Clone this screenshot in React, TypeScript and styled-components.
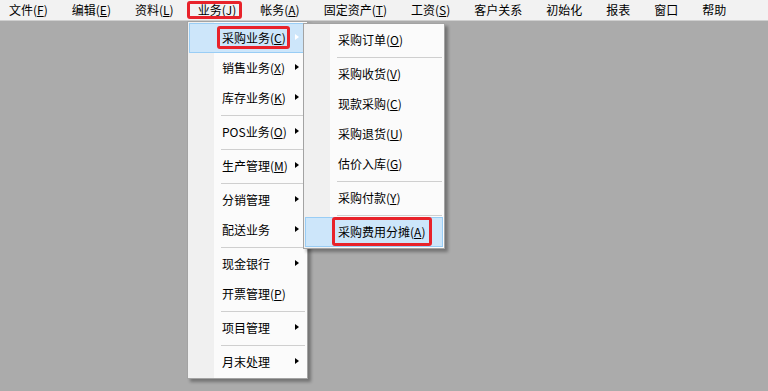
import React from 'react';
import styled, { createGlobalStyle } from 'styled-components';

const GlobalStyle = createGlobalStyle`
  html, body {
    margin: 0;
    padding: 0;
    background: #ababab;
  }
  body {
    font-family: "Noto Sans CJK SC", "Noto Sans", sans-serif;
    font-size: 12px;
    color: #000;
  }
`;

const Workspace = styled.div`
  position: relative;
  width: 768px;
  height: 391px;
  overflow: hidden;
  background: #ababab;
`;

const MenuBar = styled.div`
  display: flex;
  align-items: center;
  gap: 24px;
  height: 20px;
  padding-left: 9px;
  background: #f2f2f2;
  border-bottom: 1px solid #cfcfcf;
`;

const BarItem = styled.span`
  position: relative;
  line-height: 20px;
  white-space: nowrap;
`;

// red annotation frame drawn over the text, does not affect layout
const Marked = styled.span<{ $inset: string }>`
  position: relative;
  &::after {
    content: '';
    position: absolute;
    inset: ${p => p.$inset};
    border: 3px solid #e8222a;
    border-radius: 3px;
    pointer-events: none;
  }
`;

const Menu = styled.div<{ $left: number; $top: number; $width: number }>`
  position: absolute;
  left: ${p => p.$left}px;
  top: ${p => p.$top}px;
  width: ${p => p.$width}px;
  box-sizing: border-box;
  padding: 1px;
  border: 1px solid #a3a3a3;
  background: linear-gradient(to right, #f0f0f0 0 26px, #fbfbfb 26px);
  box-shadow: 3px 3px 3px rgba(0, 0, 0, 0.32);
  display: flex;
  flex-direction: column;
`;

const Row = styled.div<{ $active?: boolean }>`
  display: flex;
  align-items: center;
  height: 30px;
  box-sizing: border-box;
  padding: 0 6px 0 32px;
  border: 1px solid ${p => (p.$active ? '#99cdf5' : 'transparent')};
  background: ${p => (p.$active ? '#cde6fa' : 'transparent')};
  line-height: 16px;
  white-space: nowrap;
`;

const Arrow = styled.span<{ $light?: boolean }>`
  margin-left: auto;
  margin-top: -2px;
  width: 0;
  height: 0;
  border-top: 3.5px solid transparent;
  border-bottom: 3.5px solid transparent;
  border-left: 4px solid ${p => (p.$light ? '#ffffff' : '#000000')};
`;

const Separator = styled.div`
  height: 4px;
  margin: 0 1px 0 32px;
  display: flex;
  align-items: center;
  &::before {
    content: '';
    flex: 1;
    height: 1px;
    background: #cfcfcf;
  }
`;

type Entry =
  | { sep: true }
  | { label: string; key?: string; sub?: boolean; active?: boolean; inset?: string };

const Label: React.FC<{ label: string; k?: string }> = ({ label, k }) => (
  <>
    {label}
    {k && (
      <>
        (<u>{k}</u>)
      </>
    )}
  </>
);

const bar: { label: string; key?: string; inset?: string }[] = [
  { label: '文件', key: 'F' },
  { label: '编辑', key: 'E' },
  { label: '资料', key: 'L' },
  { label: '业务', key: 'J', inset: '0 -6px -1px -11px' },
  { label: '帐务', key: 'A' },
  { label: '固定资产', key: 'T' },
  { label: '工资', key: 'S' },
  { label: '客户关系' },
  { label: '初始化' },
  { label: '报表' },
  { label: '窗口' },
  { label: '帮助' },
];

const business: Entry[] = [
  { label: '采购业务', key: 'C', sub: true, active: true, inset: '-4px -4px -3px -5px' },
  { label: '销售业务', key: 'X', sub: true },
  { label: '库存业务', key: 'K', sub: true },
  { sep: true },
  { label: 'POS业务', key: 'O', sub: true },
  { sep: true },
  { label: '生产管理', key: 'M', sub: true },
  { sep: true },
  { label: '分销管理', sub: true },
  { label: '配送业务', sub: true },
  { sep: true },
  { label: '现金银行', sub: true },
  { label: '开票管理', key: 'P' },
  { sep: true },
  { label: '项目管理', sub: true },
  { sep: true },
  { label: '月末处理', sub: true },
];

const purchase: Entry[] = [
  { label: '采购订单', key: 'O' },
  { sep: true },
  { label: '采购收货', key: 'V' },
  { label: '现款采购', key: 'C' },
  { label: '采购退货', key: 'U' },
  { label: '估价入库', key: 'G' },
  { sep: true },
  { label: '采购付款', key: 'Y' },
  { sep: true },
  { label: '采购费用分摊', key: 'A', active: true, inset: '-7px -7px -6px -6px' },
];

const MenuList: React.FC<{ items: Entry[] }> = ({ items }) => (
  <>
    {items.map((it, i) =>
      'sep' in it ? (
        <Separator key={i} />
      ) : (
        <Row key={i} $active={it.active}>
          {it.inset ? (
            <Marked $inset={it.inset}>
              <Label label={it.label} k={it.key} />
            </Marked>
          ) : (
            <Label label={it.label} k={it.key} />
          )}
          {it.sub && <Arrow $light={it.active} />}
        </Row>
      )
    )}
  </>
);

export default function App() {
  return (
    <Workspace>
      <GlobalStyle />
      <MenuBar>
        {bar.map(b => (
          <BarItem key={b.label}>
            {b.inset ? (
              <Marked $inset={b.inset}>
                <Label label={b.label} k={b.key} />
              </Marked>
            ) : (
              <Label label={b.label} k={b.key} />
            )}
          </BarItem>
        ))}
      </MenuBar>
      <Menu $left={187} $top={21} $width={121}>
        <MenuList items={business} />
      </Menu>
      <Menu $left={303} $top={23} $width={142}>
        <MenuList items={purchase} />
      </Menu>
    </Workspace>
  );
}
